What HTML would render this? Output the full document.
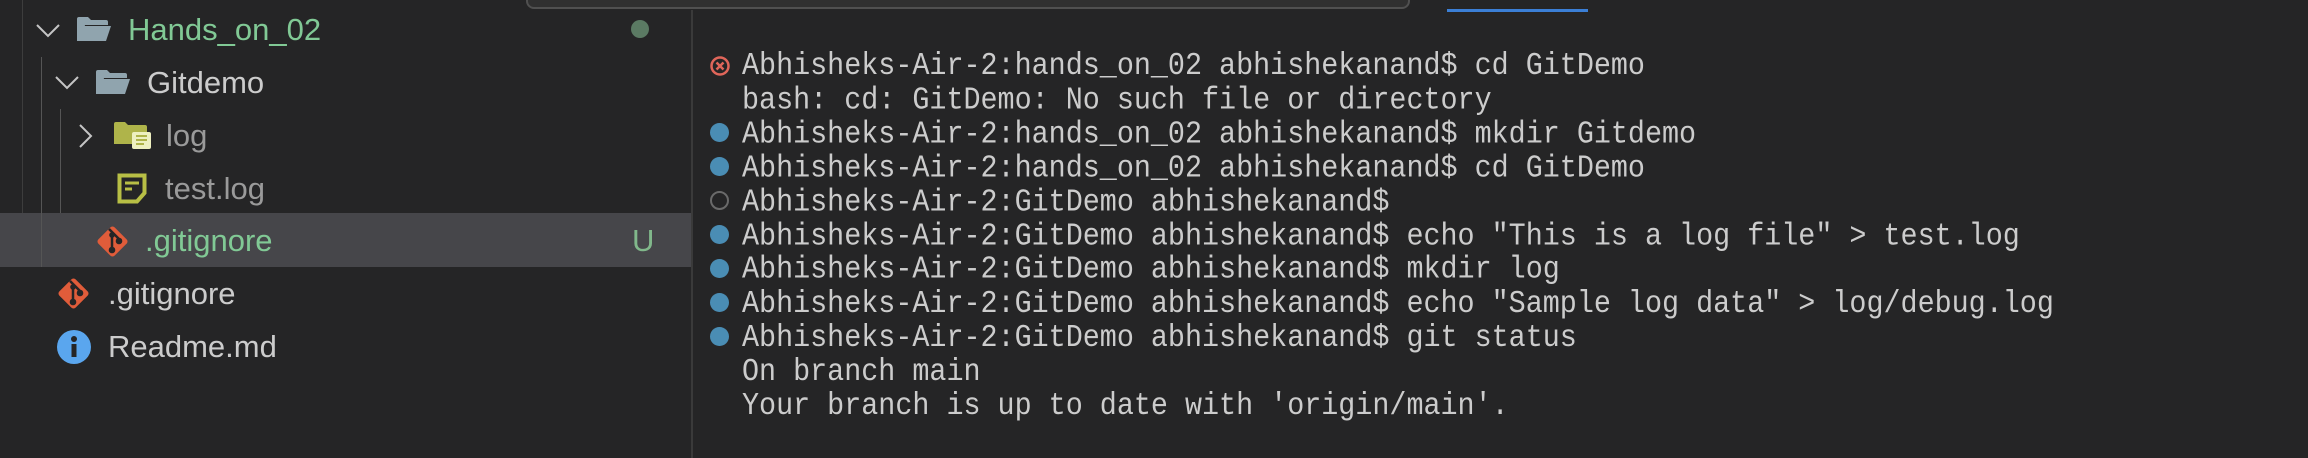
<!DOCTYPE html>
<html><head><meta charset="utf-8"><style>
*{margin:0;padding:0;box-sizing:border-box}
body{width:2308px;height:458px;background:#252526;overflow:hidden;position:relative;font-family:"Liberation Sans",sans-serif}
.sb{position:absolute;left:0;top:0;width:692px;height:458px;background:#252526}
.div{position:absolute;left:691px;top:10px;width:2px;height:448px;background:#3a3a3a}
.row{position:absolute;left:0;width:691px;height:53px}
.t{position:absolute;font-size:31px;line-height:53px;top:0;white-space:nowrap}
.g{position:absolute;width:1px;background:#4a4a4a}
svg{position:absolute}
.term{position:absolute;left:742px;top:50px;font-family:"Liberation Mono",monospace;font-size:28.4px;line-height:34px;color:#cccccc;white-space:pre;transform:scaleY(1.1);transform-origin:0 0}
.d{position:absolute;left:710px;width:19px;height:19px;border-radius:50%;background:#4a8db4}
</style></head><body>
<div class="sb">
  <div class="g" style="left:22px;top:0;height:267px;background:#3d3d3d"></div>
  <div class="row" style="top:213px;height:54px;background:#46464a"></div>
  <div class="g" style="left:41px;top:57px;height:210px;background:#555"></div>
  <div class="g" style="left:60px;top:109px;height:104px;background:#555"></div>

  <svg style="left:36px;top:24px" width="24" height="14" viewBox="0 0 24 14"><path d="M1 1 L12 12 L23 1" fill="none" stroke="#c5c5c5" stroke-width="2"/></svg>
  <svg style="left:76px;top:16px" width="36" height="26" viewBox="0 0 36 26"><path d="M1 3 Q1 1 3 1 H12 L15 4 H30 Q32 4 32 6 V9 H9 L5 25 H1 Z" fill="#90a4ae"/><path d="M8 10 H35 L30 25 H3 Z" fill="#90a4ae"/></svg>
  <div class="t" style="left:128px;top:3px;color:#81c995">Hands_on_02</div>
  <div style="position:absolute;left:631px;top:20px;width:18px;height:18px;border-radius:50%;background:#5b7a63"></div>

  <svg style="left:55px;top:76px" width="24" height="14" viewBox="0 0 24 14"><path d="M1 1 L12 12 L23 1" fill="none" stroke="#c5c5c5" stroke-width="2"/></svg>
  <svg style="left:95px;top:69px" width="36" height="26" viewBox="0 0 36 26"><path d="M1 3 Q1 1 3 1 H12 L15 4 H30 Q32 4 32 6 V9 H9 L5 25 H1 Z" fill="#90a4ae"/><path d="M8 10 H35 L30 25 H3 Z" fill="#90a4ae"/></svg>
  <div class="t" style="left:147px;top:56px;color:#cccccc">Gitdemo</div>

  <svg style="left:79px;top:124px" width="14" height="24" viewBox="0 0 14 24"><path d="M1 1 L12 12 L1 23" fill="none" stroke="#c5c5c5" stroke-width="2"/></svg>
  <svg style="left:114px;top:122px" width="38" height="28" viewBox="0 0 38 28"><path d="M0 2 Q0 0 2 0 H11 L14 3 H31 Q33 3 33 5 V22 H0 Z" fill="#afb44a"/><rect x="18" y="10" width="19" height="17" rx="2" fill="#eef0c0"/><path d="M22 14 H33 M22 18 H33 M22 22 H30" stroke="#afb44a" stroke-width="2"/></svg>
  <div class="t" style="left:166px;top:109px;color:#9a9a9a">log</div>

  <svg style="left:117px;top:173px" width="30" height="31" viewBox="0 0 30 31"><path d="M2.5 2.5 H27.5 V20 L20 28.5 H2.5 Z" fill="none" stroke="#b8bf45" stroke-width="4"/><path d="M8 10 H22 M8 16 H15" stroke="#b8bf45" stroke-width="3"/></svg>
  <div class="t" style="left:165px;top:162px;color:#9a9a9a">test.log</div>

  <svg style="left:95px;top:224px" width="35" height="35" viewBox="0 0 35 35"><rect x="6" y="6" width="23" height="23" rx="3" transform="rotate(45 17.5 17.5)" fill="#e05c3a"/><path d="M14 5 L25 16 M17 11 V26" stroke="#252526" stroke-width="2.5"/><circle cx="17" cy="26" r="3.3" fill="#252526"/><circle cx="17" cy="11" r="2.8" fill="#252526"/><circle cx="24" cy="17" r="3.3" fill="#252526"/></svg>
  <div class="t" style="left:145px;top:214px;color:#81c995">.gitignore</div>
  <div class="t" style="left:632px;top:214px;color:#81b88b">U</div>

  <svg style="left:56px;top:276px" width="35" height="35" viewBox="0 0 35 35"><rect x="6" y="6" width="23" height="23" rx="3" transform="rotate(45 17.5 17.5)" fill="#e05c3a"/><path d="M14 5 L25 16 M17 11 V26" stroke="#252526" stroke-width="2.5"/><circle cx="17" cy="26" r="3.3" fill="#252526"/><circle cx="17" cy="11" r="2.8" fill="#252526"/><circle cx="24" cy="17" r="3.3" fill="#252526"/></svg>
  <div class="t" style="left:108px;top:267px;color:#cccccc">.gitignore</div>

  <svg style="left:57px;top:330px" width="34" height="34" viewBox="0 0 34 34"><circle cx="17" cy="17" r="17" fill="#5aa6ee"/><circle cx="17" cy="9" r="3" fill="#252526"/><rect x="14.5" y="14" width="5" height="13" fill="#252526"/></svg>
  <div class="t" style="left:108px;top:320px;color:#cccccc">Readme.md</div>
</div>
<div class="div"></div>

<div style="position:absolute;left:526px;top:-20px;width:884px;height:29px;background:#303030;border:2px solid #505050;border-radius:8px"></div>
<div style="position:absolute;left:1447px;top:9px;width:141px;height:3px;background:#3b7fd6"></div>

<svg style="left:709px;top:55px" width="22" height="22" viewBox="0 0 22 22"><circle cx="11" cy="11" r="8.5" fill="none" stroke="#e0665a" stroke-width="2.5"/><path d="M7.5 7.5 L14.5 14.5 M14.5 7.5 L7.5 14.5" stroke="#e0665a" stroke-width="2.5"/></svg>
<div class="d" style="top:123px"></div>
<div class="d" style="top:157px"></div>
<div style="position:absolute;left:710px;top:191px;width:19px;height:19px;border-radius:50%;border:2.5px solid #6a6a6a"></div>
<div class="d" style="top:225px"></div>
<div class="d" style="top:259px"></div>
<div class="d" style="top:293px"></div>
<div class="d" style="top:327px"></div>
<div class="term" style="line-height:30.9px">Abhisheks-Air-2:hands_on_02 abhishekanand$ cd GitDemo
bash: cd: GitDemo: No such file or directory
Abhisheks-Air-2:hands_on_02 abhishekanand$ mkdir Gitdemo
Abhisheks-Air-2:hands_on_02 abhishekanand$ cd GitDemo
Abhisheks-Air-2:GitDemo abhishekanand$ 
Abhisheks-Air-2:GitDemo abhishekanand$ echo "This is a log file" &gt; test.log
Abhisheks-Air-2:GitDemo abhishekanand$ mkdir log
Abhisheks-Air-2:GitDemo abhishekanand$ echo "Sample log data" &gt; log/debug.log
Abhisheks-Air-2:GitDemo abhishekanand$ git status
On branch main
Your branch is up to date with 'origin/main'.</div>
</body></html>
